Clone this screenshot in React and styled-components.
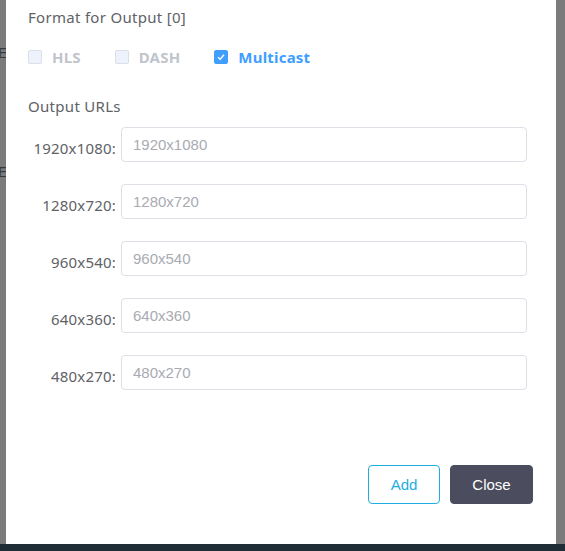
import { createGlobalStyle } from "styled-components";
import styled from "styled-components";

const resolutions = ["1920x1080", "1280x720", "960x540", "640x360", "480x270"];
const formats = [
  { name: "HLS", checked: false },
  { name: "DASH", checked: false },
  { name: "Multicast", checked: true },
];

const GlobalStyle = createGlobalStyle`
  html, body {
    margin: 0;
    padding: 0;
    background: #7b7b7b;
  }
  * {
    box-sizing: border-box;
  }
`;

const App = () => {
  return (
    <>
      <GlobalStyle />
      <Page>
        <Backdrop>
          <Behind>
            <Ghost $top={44}>E</Ghost>
            <Ghost $top={163}>E</Ghost>
          </Behind>
          <Modal>
            <SectionTitle>Format for Output [0]</SectionTitle>
            <CheckRow>
              {formats.map(f => (
                <CheckItem key={f.name} $checked={f.checked}>
                  <Box $checked={f.checked}>
                    {f.checked && (
                      <svg width="10" height="10" viewBox="0 0 10 10">
                        <path d="M2 5.2 L4.2 7.2 L8 2.8" fill="none" stroke="#fff" strokeWidth="1.4" />
                      </svg>
                    )}
                  </Box>
                  {f.name}
                </CheckItem>
              ))}
            </CheckRow>
            <SectionTitle>Output URLs</SectionTitle>
            <Fields>
              {resolutions.map(r => (
                <FieldRow key={r}>
                  <Label>{r}:</Label>
                  <Input placeholder={r} />
                </FieldRow>
              ))}
            </Fields>
            <Footer>
              <OutlineButton>Add</OutlineButton>
              <DarkButton>Close</DarkButton>
            </Footer>
          </Modal>
        </Backdrop>
        <BottomBar />
      </Page>
    </>
  );
};

const Page = styled.div`
  width: 565px;
  height: 551px;
  display: flex;
  flex-direction: column;
  overflow: hidden;
`;

const Backdrop = styled.div`
  position: relative;
  height: 544px;
  padding-left: 6px;
  display: flex;
`;

const Behind = styled.div`
  position: absolute;
  left: 0;
  top: 0;
  width: 6px;
  height: 100%;
  overflow: hidden;
`;

const Ghost = styled.span`
  position: absolute;
  top: ${p => p.$top}px;
  left: -2px;
  font: 15px "Liberation Sans", Arial, sans-serif;
  color: #3a3a3a;
`;

const Modal = styled.div`
  width: 550px;
  height: 544px;
  background: #fff;
  padding: 7px 23px 0 22px;
  display: flex;
  flex-direction: column;
  font-family: "Noto Sans", "Open Sans", sans-serif;
`;

const SectionTitle = styled.div`
  font-size: 15px;
  letter-spacing: 0.3px;
  line-height: 20px;
  color: #606266;
`;

const CheckRow = styled.div`
  display: flex;
  align-items: center;
  height: 20px;
  margin: 20px 0 29px;
`;

const CheckItem = styled.label`
  display: flex;
  align-items: center;
  gap: 10px;
  font-size: 15px;
  font-weight: 700;
  letter-spacing: 0.2px;
  color: ${p => (p.$checked ? "#409eff" : "#c0c4cc")};
  margin-right: 34px;
`;

const Box = styled.span`
  width: 14px;
  height: 14px;
  border-radius: 2px;
  border: 1px solid ${p => (p.$checked ? "#409eff" : "#dcdfe6")};
  background: ${p => (p.$checked ? "#409eff" : "#edf2fc")};
  display: flex;
  align-items: center;
  justify-content: center;
`;

const Fields = styled.div`
  display: flex;
  flex-direction: column;
  gap: 22px;
  margin-top: 11px;
  padding-right: 6px;
`;

const FieldRow = styled.div`
  display: flex;
  align-items: center;
`;

const Label = styled.span`
  width: 93px;
  padding-right: 5px;
  padding-top: 6px;
  text-align: right;
  font-size: 15px;
  letter-spacing: 0.2px;
  color: #606266;
  flex-shrink: 0;
  white-space: nowrap;
`;

const Input = styled.input`
  flex: 1;
  height: 35px;
  border: 1px solid #dcdfe6;
  border-radius: 4px;
  padding: 0 11px;
  font: 15px "Liberation Sans", Arial, sans-serif;
  color: #606266;
  outline: none;

  &::placeholder {
    color: #a8abb2;
  }
`;

const Footer = styled.div`
  display: flex;
  justify-content: flex-end;
  gap: 10px;
  margin-top: 75px;
`;

const BaseButton = styled.button`
  height: 39px;
  border-radius: 4px;
  font: 15px "Liberation Sans", Arial, sans-serif;
  cursor: pointer;
`;

const OutlineButton = styled(BaseButton)`
  width: 72px;
  background: #fff;
  border: 1px solid #1eaee0;
  color: #1eaee0;
`;

const DarkButton = styled(BaseButton)`
  width: 83px;
  background: #4b4c5e;
  border: 1px solid #4b4c5e;
  color: #fff;
`;

const BottomBar = styled.div`
  height: 7px;
  background: #1f2d36;
`;

export default App;
